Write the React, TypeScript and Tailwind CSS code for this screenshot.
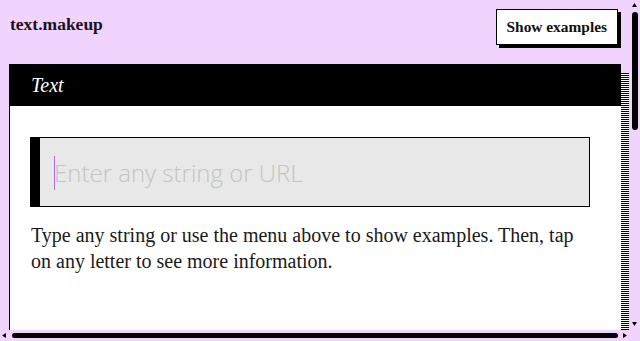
function Arrow({ dir }: { dir: "up" | "down" | "left" | "right" }) {
  const pts =
    dir === "up"
      ? "0,4 2.5,0 5,4"
      : dir === "down"
      ? "0,0 5,0 2.5,4"
      : dir === "left"
      ? "4,0 4,5 0,2.5"
      : "0,0 4,2.5 0,5";
  const w = dir === "up" || dir === "down" ? 5 : 4;
  const h = dir === "up" || dir === "down" ? 4 : 5;
  return (
    <svg width={w} height={h} viewBox={`0 0 ${w} ${h}`} className="block shrink-0">
      <polygon points={pts} fill="#000" />
    </svg>
  );
}

export default function App() {
  return (
    <div className="flex h-[341px] w-[640px] flex-col overflow-hidden bg-[#f0d4fe] [font-family:'Liberation_Serif',serif]">
      <div className="flex h-[330px]">
        <div className="w-[629px] overflow-hidden pl-[9px]">
          <header className="flex items-start justify-between pr-[11px] pt-[9px]">
            <h1 className="pl-[1px] pt-[5px] text-[17.5px] font-bold leading-[20px] text-[#1c1020]">
              text.makeup
            </h1>
            <button className="h-[36px] border border-black bg-white px-[10px] text-[15.4px] font-bold text-[#111] shadow-[3px_3px_0_#000]">
              Show examples
            </button>
          </header>
          <div className="mt-[19px] flex">
            <div className="flex-1">
              <div className="flex h-[42px] items-center bg-black pl-[22px] text-[20px] italic text-white">
                Text
              </div>
              <div className="min-h-[1180px] border-l border-black bg-white pl-[20px] pr-[31px] pt-[31px]">
                <div className="relative">
                  <input
                    placeholder="Enter any string or URL"
                    className="block h-[70px] w-full border border-l-[10px] border-black bg-[#e8e8e8] pl-[14px] text-[24px] font-light text-[#333] caret-transparent outline-none placeholder:text-[#c4c4c4] [font-family:'Open_Sans',sans-serif]"
                  />
                  <span className="absolute left-[24px] top-[19px] h-[34px] w-px bg-[#b36ad8]" />
                </div>
                <p className="mt-[15px] pl-[1px] text-[20px] leading-[26px] text-[#1a1a1a]">
                  Type any string or use the menu above to show examples. Then, tap on any letter to see more information.
                </p>
              </div>
            </div>
            <div className="mt-[9px] w-[8px] bg-[repeating-linear-gradient(to_bottom,#000_0px,#000_1px,#fff_1px,#fff_2px)]" />
          </div>
        </div>
        <div className="flex w-[11px] flex-col items-center pb-[4px] pt-[3px]">
          <Arrow dir="up" />
          <div className="mt-[5px] h-[118px] w-[6px] rounded-full bg-black" />
          <div className="flex-1" />
          <Arrow dir="down" />
        </div>
      </div>
      <div className="flex h-[11px]">
        <div className="flex w-[629px] items-center px-[2px]">
          <Arrow dir="left" />
          <div className="ml-[6px] h-[5px] w-[606px] rounded-full bg-black" />
          <div className="flex-1" />
          <Arrow dir="right" />
        </div>
        <div className="w-[11px]" />
      </div>
    </div>
  );
}
